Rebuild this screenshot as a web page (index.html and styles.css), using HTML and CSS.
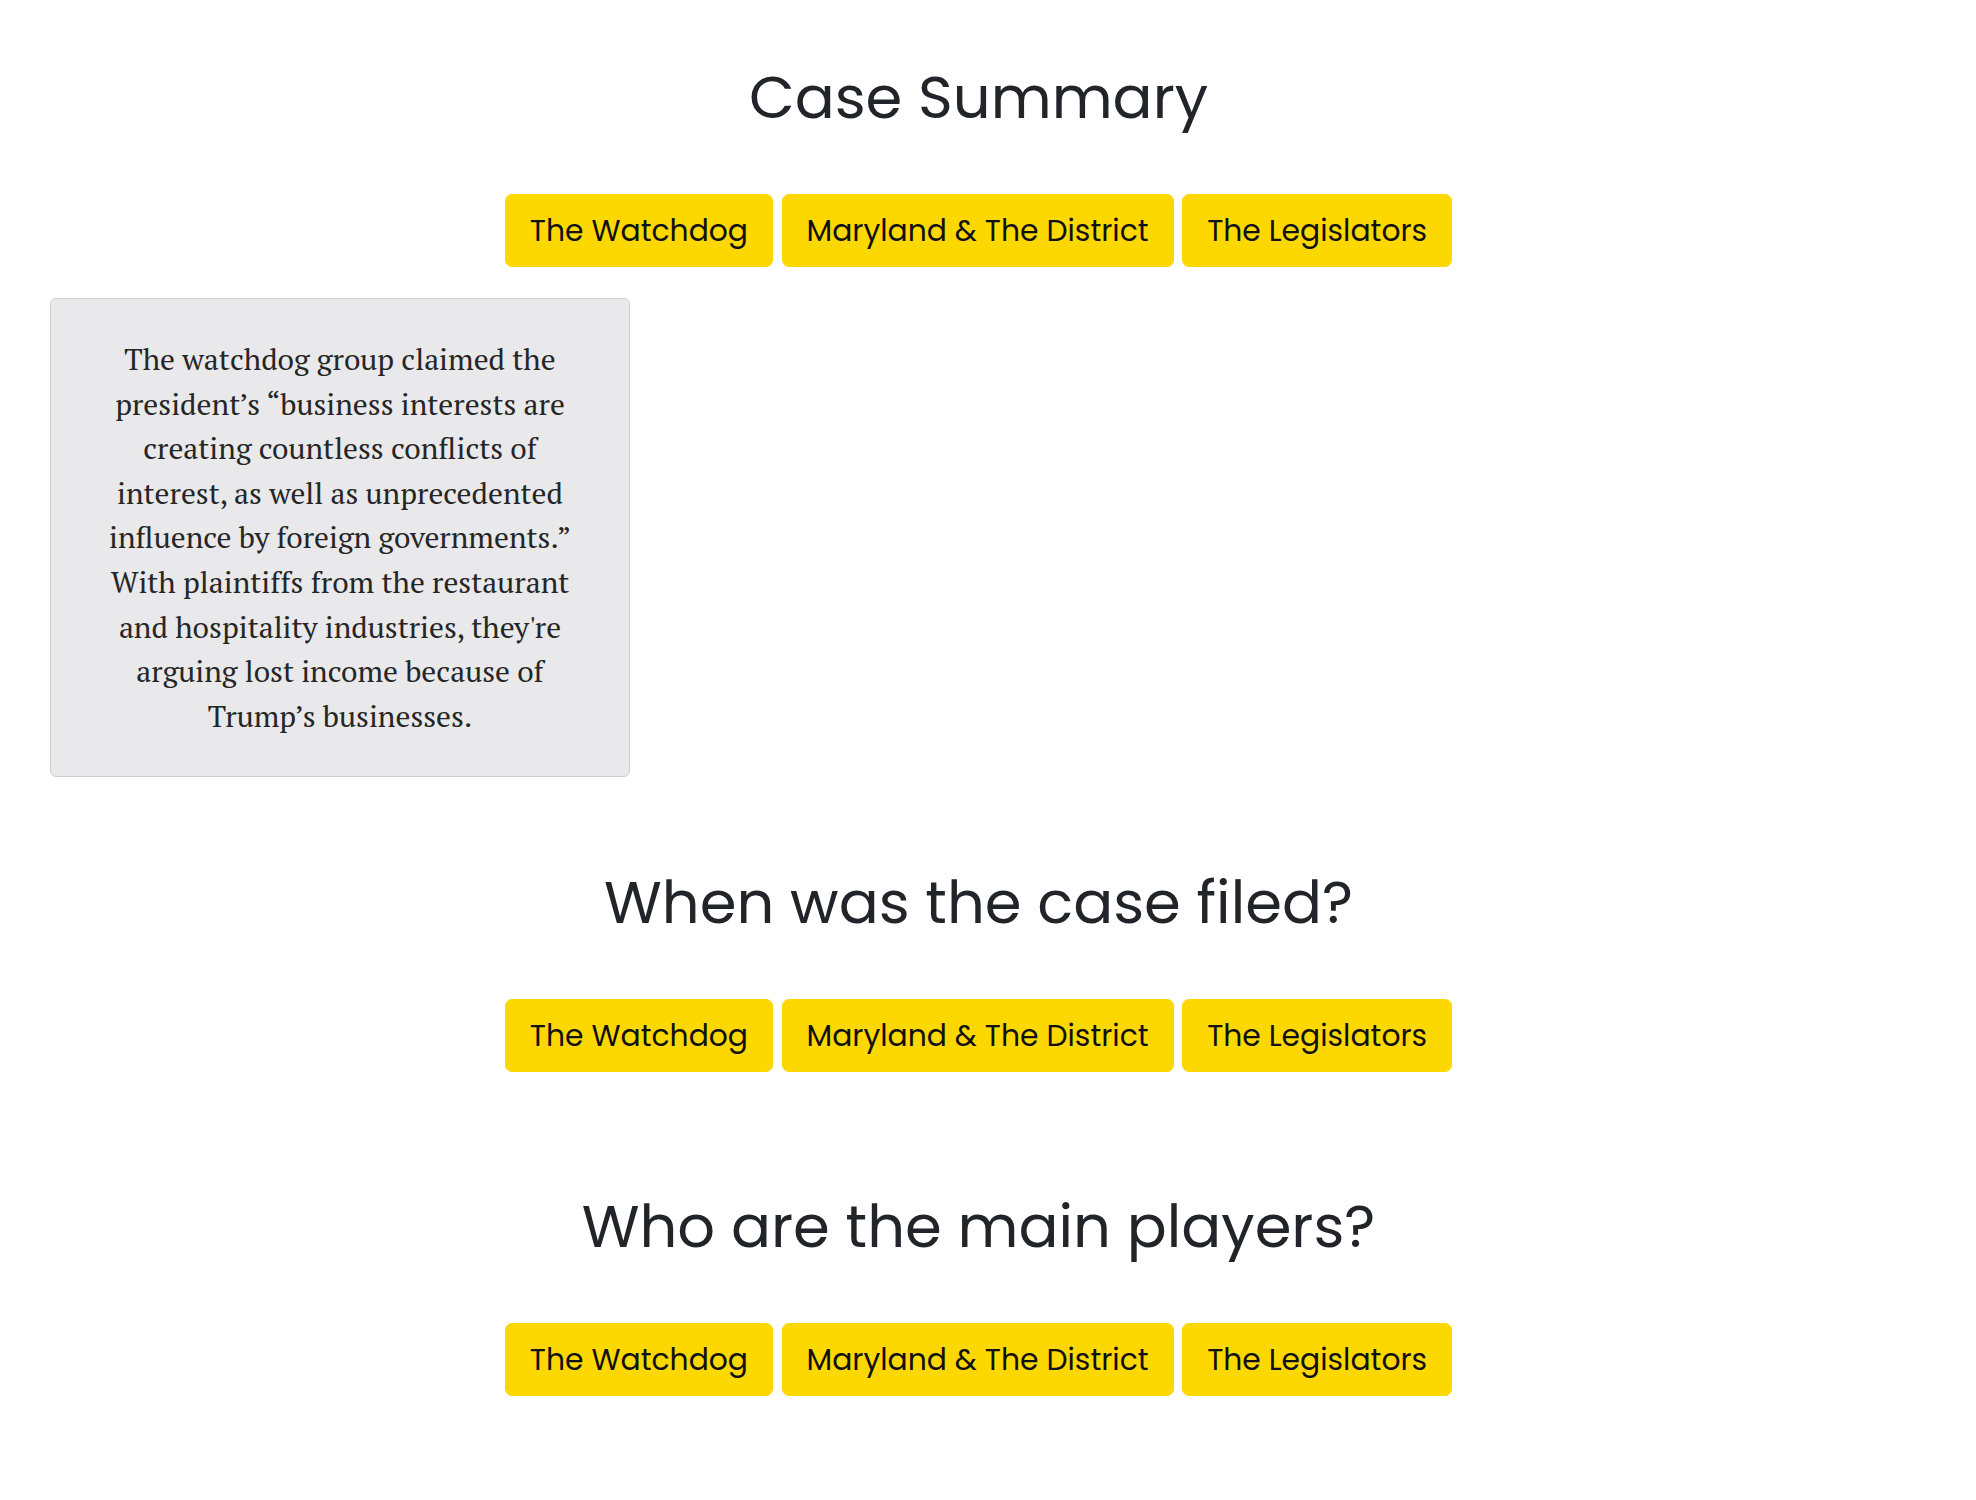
FILE: index.html
```html
<!DOCTYPE html>
<html lang="en">
<head>
    <meta charset="UTF-8">
    <meta name="viewport" content="width=device-width, initial-scale=1.0">
    <title>Case Summary</title>
    <link rel="stylesheet" href="styles.css">
</head>
<body>
    <div class="page">

        <!-- Case summary -->
        <section class="section">
            <h1 class="section-title">Case Summary</h1>
            <div class="btn-row">
                <button class="btn">The Watchdog</button>
                <button class="btn">Maryland &amp; The District</button>
                <button class="btn">The Legislators</button>
            </div>
            <div class="section-body">
                <div class="panel">
                    <p>The watchdog group claimed the president’s “business interests are creating countless conflicts of interest, as well as unprecedented influence by foreign governments.” With plaintiffs from the restaurant and hospitality industries, they're arguing lost income because of Trump’s businesses.</p>
                </div>
            </div>
        </section>

        <!-- Filing date -->
        <section class="section">
            <h2 class="section-title">When was the case filed?</h2>
            <div class="btn-row">
                <button class="btn">The Watchdog</button>
                <button class="btn">Maryland &amp; The District</button>
                <button class="btn">The Legislators</button>
            </div>
            <div class="section-body"></div>
        </section>

        <!-- Main players -->
        <section class="section">
            <h2 class="section-title">Who are the main players?</h2>
            <div class="btn-row">
                <button class="btn">The Watchdog</button>
                <button class="btn">Maryland &amp; The District</button>
                <button class="btn">The Legislators</button>
            </div>
            <div class="section-body"></div>
        </section>

    </div>
</body>
</html>
```

FILE: styles.css
```css
body {
    margin: 0;
    background-color: #fff;
    color: #212529;
    font-family: "Poppins", "DejaVu Sans", sans-serif;
}
.page {
    margin-right: 19px;
    padding-top: 62px;
}
.section {
    text-align: center;
    padding-bottom: 90px;
}
.section-title {
    margin: 0 0 60px;
    font-size: 59.2px;
    line-height: 72px;
    font-weight: 400;
    color: #212529;
}
.btn-row {
    display: flex;
    justify-content: center;
    gap: 8.5px;
}
.btn {
    font-family: inherit;
    font-size: 29.8px;
    line-height: 45px;
    padding: 13px 24px;
    border: 1.5px solid #fdd800;
    border-radius: 7px;
    background-color: #fdd800;
    color: #111;
    cursor: pointer;
}
.section-body {
    min-height: 29px;
}
.panel {
    box-sizing: border-box;
    width: 580px;
    margin: 31px 0 0 50px;
    padding: 38px 45px 38px;
    border: 1.5px solid #cfcfd2;
    border-radius: 6px;
    background-color: #e9e9eb;
}
.panel p {
    margin: 0;
    font-family: "PT Serif", "DejaVu Serif", serif;
    font-size: 29.7px;
    line-height: 44.6px;
    color: #262626;
}
```
